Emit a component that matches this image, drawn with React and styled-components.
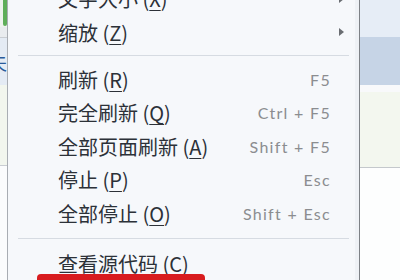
import React from "react";
import styled, { createGlobalStyle } from "styled-components";

const Global = createGlobalStyle`
  html, body {
    margin: 0;
    padding: 0;
    width: 400px;
    height: 280px;
    overflow: hidden;
    background: #ffffff;
  }
`;

const Screen = styled.div`
  position: relative;
  display: flex;
  width: 400px;
  height: 280px;
  overflow: hidden;
`;

const LeftStrip = styled.div`
  width: 7px;
  display: flex;
  flex-direction: column;
  background: #f3f5f2;
  border-right: 1px solid #a9adb3;
  overflow: hidden;
`;

const Band = styled.div`
  height: ${(p) => p.h}px;
  background: ${(p) => p.bg};
  border-bottom: ${(p) => (p.line ? `1px solid ${p.line}` : "none")};
  display: flex;
  align-items: center;
  justify-content: flex-end;
  font-family: "Noto Sans CJK SC", sans-serif;
  font-size: 18px;
  color: #2a5a9a;
  overflow: hidden;
`;

const GreenBar = styled.div`
  width: 4px;
  height: 26px;
  margin-left: 3px;
  background: #5fae5a;
  border-radius: 0 0 2px 2px;
`;

const Menu = styled.div`
  width: 351px;
  background: #f6f8fb;
  border-right: 1px solid #7d8186;
  box-shadow: inset -4px 0 0 #eef1f5;
  display: flex;
  flex-direction: column;
  margin-top: -18px;
`;

const Row = styled.div`
  height: 34px;
  display: flex;
  align-items: center;
  padding: 0 15px 0 50px;
  font-family: "Noto Sans CJK SC", "Microsoft YaHei", sans-serif;
  font-size: 20px;
  color: #2c3138;
`;

const Label = styled.span`
  flex: 1;
  white-space: nowrap;
`;

const Key = styled.u`
  text-underline-offset: 3px;
  text-decoration-thickness: 1px;
`;

const Shortcut = styled.span`
  font-family: "Lato", "DejaVu Sans", sans-serif;
  font-size: 16px;
  letter-spacing: 1.3px;
  color: #8b8d90;
  margin-right: 13px;
`;

const Arrow = styled.span`
  width: 0;
  height: 0;
  border-top: 4.5px solid transparent;
  border-bottom: 4.5px solid transparent;
  border-left: 5px solid #6a6d72;
`;

const Separator = styled.div`
  height: ${(p) => p.h}px;
  display: flex;
  align-items: center;
  padding: 0 10px;

  &::after {
    content: "";
    flex: 1;
    height: 1px;
    background: #d6dbe2;
  }
`;

const RightStrip = styled.div`
  flex: 1;
  display: flex;
  flex-direction: column;
`;

const RedMark = styled.div`
  position: absolute;
  left: 37px;
  top: 274px;
  width: 168px;
  height: 12px;
  background: #d81c1f;
  border-radius: 4px;
`;

function Item({ label, k, shortcut, submenu }) {
  return (
    <Row>
      <Label>
        {label} (<Key>{k}</Key>)
      </Label>
      {shortcut && <Shortcut>{shortcut}</Shortcut>}
      {submenu && <Arrow />}
    </Row>
  );
}

export default function App() {
  return (
    <Screen>
      <Global />
      <LeftStrip>
        <Band h={27} bg="#eef3ee">
          <GreenBar />
        </Band>
        <Band h={10} bg="#e9ecef" line="#c9cdd2" />
        <Band h={48} bg="#e4ebf4">夫</Band>
        <Band h={80} bg="#f2f6ee" line="#c9cdd2" />
        <Band h={115} bg="#fbfcfd" />
      </LeftStrip>
      <Menu>
        <Item label="文字大小" k="X" submenu />
        <Item label="缩放" k="Z" submenu />
        <Separator h={14} />
        <Item label="刷新" k="R" shortcut="F5" />
        <Item label="完全刷新" k="Q" shortcut="Ctrl + F5" />
        <Item label="全部页面刷新" k="A" shortcut="Shift + F5" />
        <Item label="停止" k="P" shortcut="Esc" />
        <Item label="全部停止" k="O" shortcut="Shift + Esc" />
        <Separator h={17} />
        <Item label="查看源代码" k="C" />
      </Menu>
      <RightStrip>
        <Band h={37} bg="#e6edf6" />
        <Band h={48} bg="#c6d4e6" />
        <Band h={7} bg="#f8f9fb" />
        <Band h={76} bg="#f3f7ef" line="#c4c8cc" />
        <Band h={112} bg="#fdfefe" />
      </RightStrip>
      <RedMark />
    </Screen>
  );
}
